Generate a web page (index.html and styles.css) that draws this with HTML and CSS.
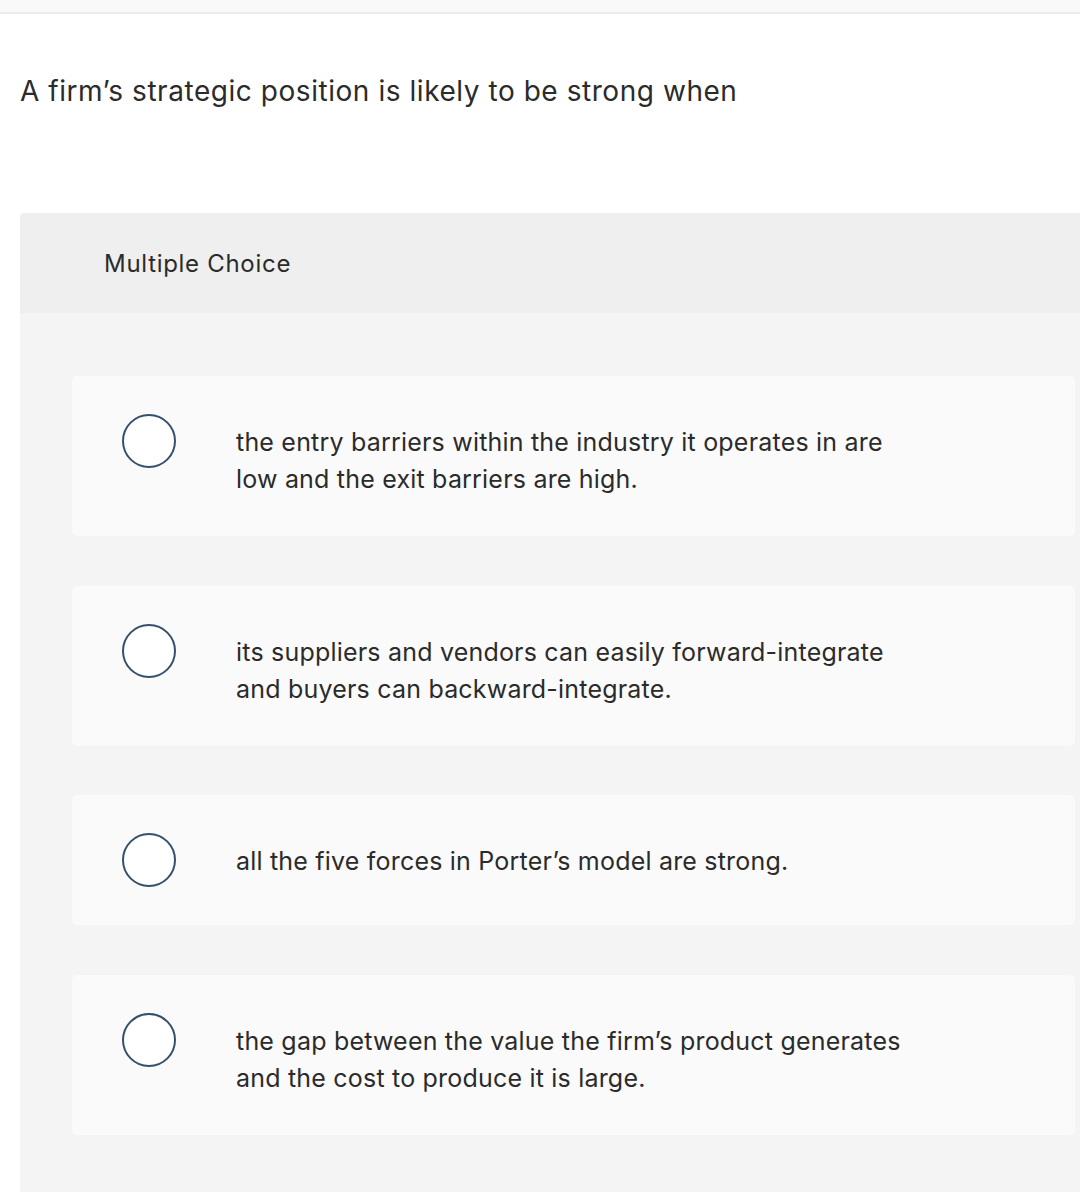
FILE: index.html
```html
<!DOCTYPE html>
<html lang="en">
<head>
<meta charset="utf-8">
<title>Multiple Choice</title>
<link rel="stylesheet" href="styles.css">
</head>
<body>
<div class="topbar"></div>
<main class="page">
  <h1 class="prompt">A firm’s strategic position is likely to be strong when</h1>
  <section class="panel">
    <header class="panel-head">Multiple Choice</header>
    <div class="panel-body">
      <label class="choice">
        <span class="radio"></span>
        <span class="choice-text">the entry barriers within the industry it operates in are low and the exit barriers are high.</span>
      </label>
      <label class="choice">
        <span class="radio"></span>
        <span class="choice-text">its suppliers and vendors can easily forward-integrate and buyers can backward-integrate.</span>
      </label>
      <label class="choice">
        <span class="radio"></span>
        <span class="choice-text">all the five forces in Porter’s model are strong.</span>
      </label>
      <label class="choice">
        <span class="radio"></span>
        <span class="choice-text">the gap between the value the firm’s product generates and the cost to produce it is large.</span>
      </label>
    </div>
  </section>
</main>
</body>
</html>
```

FILE: styles.css
```css
html, body {
  margin: 0;
  padding: 0;
  background: #ffffff;
  overflow: hidden;
}
body {
  font-family: "Inter", "Liberation Sans", sans-serif;
  color: #2b2b2b;
}
.topbar {
  height: 12px;
  background: #f9f9f9;
  border-bottom: 2px solid #ececec;
}
.page {
  padding: 0 0 0 20px;
}
.prompt {
  margin: 0;
  padding-top: 60px;
  font-size: 28px;
  letter-spacing: 0.55px;
  line-height: 34px;
  font-weight: 400;
  color: #2b2b2b;
}
.panel {
  margin-top: 105px;
  width: 1080px;
}
.panel-head {
  height: 100px;
  background: #efefef;
  display: flex;
  align-items: center;
  padding-left: 84px;
  font-size: 24px;
  letter-spacing: 0.7px;
  color: #2b2b2b;
  border-radius: 4px 0 0 0;
}
.panel-body {
  background: #f4f4f4;
  padding: 63px 0 57px 52px;
  display: flex;
  flex-direction: column;
  gap: 49.5px;
}
.choice {
  width: 1003px;
  box-sizing: border-box;
  background: #fafafa;
  border-radius: 5px;
  padding: 38px 40px 38px 50px;
  display: flex;
  align-items: flex-start;
  gap: 60px;
}
.radio {
  flex: none;
  width: 54px;
  height: 54px;
  box-sizing: border-box;
  border: 2px solid #34506c;
  border-radius: 50%;
  background: #ffffff;
}
.choice-text {
  padding: 10px 0 0;
  font-size: 25px;
  letter-spacing: 0.2px;
  line-height: 37px;
  color: #2b2b2b;
  max-width: 680px;
}
```
